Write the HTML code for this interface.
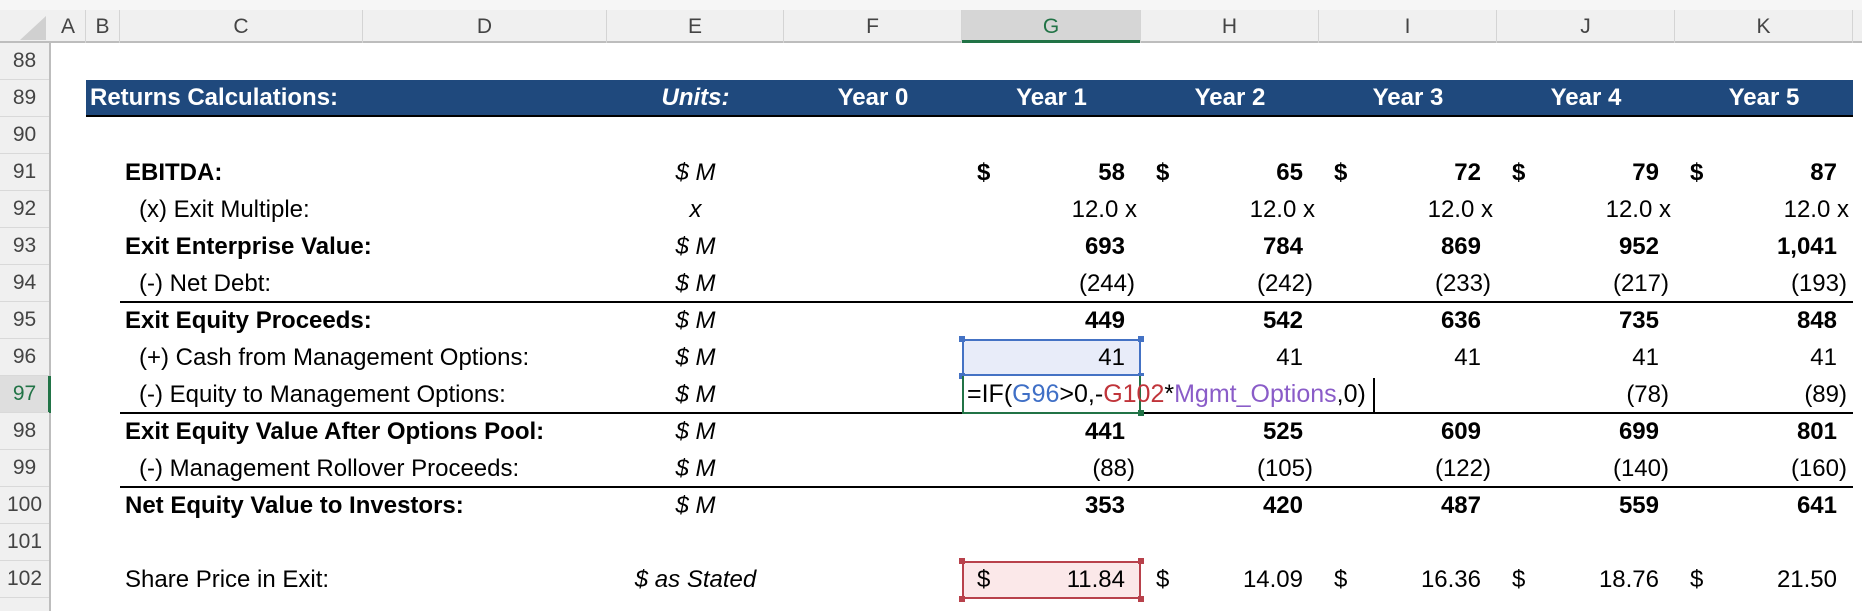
<!DOCTYPE html>
<html><head><meta charset="utf-8"><style>
*{margin:0;padding:0;box-sizing:border-box}
body{width:1862px;height:611px;overflow:hidden;background:#fff;font-family:"Liberation Sans",Arial,sans-serif;position:relative;color:#000}
.a{position:absolute;white-space:nowrap;display:flex;align-items:center;font-size:24px;line-height:1}
.hd{position:absolute;color:#444;font-size:21px;display:flex;align-items:center;justify-content:center}
.b{font-weight:bold;font-size:24px}.i{font-style:italic}
.r{justify-content:flex-end}.c{justify-content:center}
.hl{position:absolute;height:2px;background:#000}
</style></head><body>
<div style="position:absolute;left:0;top:0;width:1862px;height:43px;background:#f0f0f0;border-bottom:2px solid #bdbdbd"></div>
<div style="position:absolute;left:0;top:0;width:1862px;height:10px;background:#f6f6f6"></div>
<svg style="position:absolute;left:0;top:10px" width="51" height="33"><polygon points="46,6 46,30 20,30" fill="#d0d0d0"/></svg>
<div style="position:absolute;left:0;top:43px;width:51px;height:568px;background:#f0f0f0;border-right:2px solid #bdbdbd"></div>
<div style="position:absolute;left:0;top:376px;width:51px;height:37px;background:#dedede;border-right:3px solid #217346"></div>
<div style="position:absolute;left:962px;top:10px;width:179px;height:33px;background:#d6d6d6;border-bottom:3px solid #217346"></div>
<div id="colhdr"></div>
<div id="rowhdr"></div>
<div style="position:absolute;left:86px;top:80px;width:1767px;height:37px;background:#1f497d;border-bottom:2px solid #000"></div>
<div class="a b" style="left:90px;top:80px;height:36px;color:#fff">Returns Calculations:</div>
<div class="a b i c" style="left:607px;width:177px;top:80px;height:36px;color:#fff">Units:</div>
<div id="body"></div>
<div class="hl" style="left:120px;width:1733px;top:301px"></div>
<div class="hl" style="left:120px;width:1733px;top:412px"></div>
<div class="hl" style="left:120px;width:1733px;top:486px"></div>
<div style="position:absolute;left:962px;top:339px;width:179px;height:37px;background:#e8ecf9;border:2px solid #4472c4"></div>
<div style="position:absolute;left:959px;top:336px;width:6px;height:6px;background:#4472c4"></div>
<div style="position:absolute;left:1138px;top:336px;width:6px;height:6px;background:#4472c4"></div>
<div style="position:absolute;left:959px;top:373px;width:6px;height:6px;background:#4472c4"></div>
<div style="position:absolute;left:1138px;top:373px;width:6px;height:6px;background:#4472c4"></div>
<div style="position:absolute;left:962px;top:376px;width:412px;height:36px;background:#fff"></div>
<div style="position:absolute;left:962px;top:376px;width:179px;height:38px;border:2px solid #217346;border-top:none"></div>
<div style="position:absolute;left:1138px;top:410px;width:6px;height:6px;background:#217346"></div>
<div style="position:absolute;left:1373px;top:378px;width:2px;height:34px;background:#000"></div>
<div style="position:absolute;left:962px;top:561px;width:179px;height:38px;background:#fbe8e9;border:2px solid #b8414b"></div>
<div style="position:absolute;left:959px;top:558px;width:6px;height:6px;background:#b8414b"></div>
<div style="position:absolute;left:1138px;top:558px;width:6px;height:6px;background:#b8414b"></div>
<div style="position:absolute;left:959px;top:596px;width:6px;height:6px;background:#b8414b"></div>
<div style="position:absolute;left:1138px;top:596px;width:6px;height:6px;background:#b8414b"></div>
<div id="body2"></div>
<div class="a" style="left:967px;top:376px;height:37px;font-size:25px">=IF(<span style="color:#3f6fc6">G96</span>&gt;0,-<span style="color:#c0343a">G102</span>*<span style="color:#8a5cc8">Mgmt_Options</span>,0)</div>
<script>
var X=[0,51,86,120,363,607,784,962,1141,1319,1497,1675,1853];
var L="ABCDEFGHIJK";
var h="";
for(var k=0;k<11;k++){var g=k==6;h+='<div class="hd" style="left:'+X[k+1]+'px;width:'+(X[k+2]-X[k+1])+'px;top:10px;height:33px;border-right:1px solid #d4d4d4;'+(g?'color:#217346':'')+'">'+L[k]+'</div>';}
document.getElementById('colhdr').innerHTML=h;
h="";
for(var n=88;n<=102;n++){var t=43+(n-88)*37;h+='<div class="hd" style="left:0;width:49px;top:'+t+'px;height:37px;border-bottom:1px solid #d9d9d9;'+(n==97?'color:#217346':'')+'">'+n+'</div>';}
document.getElementById('rowhdr').innerHTML=h;
function T(n){return 43+(n-88)*37;}
var out="";
function lab(n,s,b,ind){out+='<div class="a'+(b?' b':'')+'" style="left:'+(ind?139:125)+'px;top:'+T(n)+'px;height:37px">'+s+'</div>';}
function unit(n,s){out+='<div class="a i c" style="left:607px;width:177px;top:'+T(n)+'px;height:37px">'+s+'</div>';}
function vals(n,arr,b,dollar){for(var k=0;k<arr.length;k++){var v=arr[k];if(v==null)continue;var c=7+k;var par=v.charAt(0)=='(';
out+='<div class="a r'+(b?' b':'')+'" style="left:'+X[c]+'px;width:'+(X[c+1]-X[c]-(par?6:16))+'px;top:'+T(n)+'px;height:37px">'+v+'</div>';
if(dollar)out+='<div class="a'+(b?' b':'')+'" style="left:'+(X[c]+15)+'px;top:'+T(n)+'px;height:37px">$</div>';}}
var y=["Year 0","Year 1","Year 2","Year 3","Year 4","Year 5"];
for(var k=0;k<6;k++){var c=6+k;out+='<div class="a b c" style="color:#fff;left:'+X[c]+'px;width:'+(X[c+1]-X[c])+'px;top:80px;height:36px">'+y[k]+'</div>';}
lab(91,"EBITDA:",1);unit(91,"$ M");vals(91,["58","65","72","79","87"],1,1);
lab(92,"(x) Exit Multiple:",0,1);unit(92,"x");
for(var k=0;k<5;k++){var c=7+k;out+='<div class="a r" style="left:'+X[c]+'px;width:'+(X[c+1]-X[c]-4)+'px;top:'+T(92)+'px;height:37px">12.0 x</div>';}
lab(93,"Exit Enterprise Value:",1);unit(93,"$ M");vals(93,["693","784","869","952","1,041"],1);
lab(94,"(-) Net Debt:",0,1);unit(94,"$ M");vals(94,["(244)","(242)","(233)","(217)","(193)"]);
lab(95,"Exit Equity Proceeds:",1);unit(95,"$ M");vals(95,["449","542","636","735","848"],1);
lab(96,"(+) Cash from Management Options:",0,1);unit(96,"$ M");
lab(97,"(-) Equity to Management Options:",0,1);unit(97,"$ M");vals(97,[null,null,null,"(78)","(89)"]);
lab(98,"Exit Equity Value After Options Pool:",1);unit(98,"$ M");vals(98,["441","525","609","699","801"],1);
lab(99,"(-) Management Rollover Proceeds:",0,1);unit(99,"$ M");vals(99,["(88)","(105)","(122)","(140)","(160)"]);
lab(100,"Net Equity Value to Investors:",1);unit(100,"$ M");vals(100,["353","420","487","559","641"],1);
lab(102,"Share Price in Exit:");unit(102,"$ as Stated");
document.getElementById('body').innerHTML=out;
out="";
vals(96,["41","41","41","41","41"]);
vals(102,["11.84","14.09","16.36","18.76","21.50"],0,1);
document.getElementById('body2').innerHTML=out;
</script>
</body></html>
